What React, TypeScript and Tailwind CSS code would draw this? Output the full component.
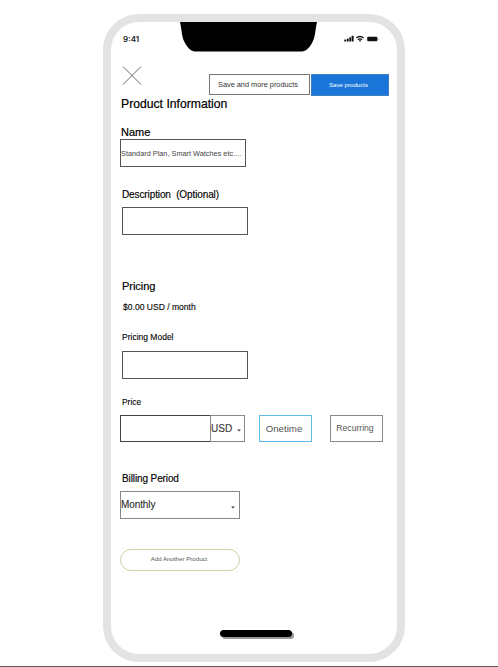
import React from 'react';

function StatusBar() {
  return (
    <div className="flex h-[30px] items-start pl-[12px]">
      <span className="mt-[9px] w-[57px] shrink-0 font-[Inter,sans-serif] text-[8px] leading-[16px] font-semibold text-[#222]">9:41</span>
      <svg className="h-[30px] w-[137px] shrink-0" viewBox="0 0 137 30">
        <path d="M0 0H137C135 9 135.5 15 132 21C129 27 125 29.5 121 29.5H16C12 29.5 8 27 5 21C1.5 15 2 9 0 0Z" fill="#000" />
      </svg>
      <svg className="mt-[12px] ml-[27px] h-[10px] w-[36px] shrink-0" viewBox="0 0 36 10" fill="#111">
        <rect x="0.3" y="5.4" width="1.9" height="2.2" rx="0.4" />
        <rect x="2.8" y="4.5" width="1.9" height="3.1" rx="0.4" />
        <rect x="5.3" y="3.2" width="1.9" height="4.4" rx="0.4" />
        <rect x="7.7" y="1.8" width="1.9" height="5.8" rx="0.4" />
        <g fill="none" stroke="#111" strokeWidth="1.3">
          <path d="M12.4 4.1Q16 0.8 19.6 4.1" />
          <path d="M14 5.8Q16 3.9 18 5.8" />
        </g>
        <path d="M14.8 6.6Q16 5.7 17.2 6.6L16 8Z" />
        <rect x="23.2" y="2.8" width="10.2" height="4.4" rx="1" />
        <rect x="34.2" y="4" width="0.8" height="2" rx="0.4" fill="#aaa" />
      </svg>
    </div>
  );
}

function Caret({ className }: { className: string }) {
  return (
    <svg className={className} viewBox="0 0 4 3" fill="#333">
      <path d="M0.2 0.4H3.8L2 2.6Z" />
    </svg>
  );
}

export default function App() {
  return (
    <div className="flex h-[667px] w-[498px] flex-col overflow-hidden border-b border-[#58585a] bg-white pt-[14px] pl-[103px] font-['Liberation_Sans',Arial,sans-serif] text-black [&_*]:whitespace-nowrap">
      <main className="flex h-[648px] w-[302px] shrink-0 flex-col rounded-[36px] border-8 border-[#e4e2e5] bg-white">
        <StatusBar />
        <header className="flex h-[44px] items-start pl-[11px]">
          <svg className="mt-[14px] h-[19px] w-[20px] shrink-0" viewBox="0 0 20 19" stroke="#444" strokeWidth="0.8">
            <path d="M1 0.5L19 18.5M19 0.5L1 18.5" />
          </svg>
          <button className="mt-[22px] ml-[67px] h-[21px] w-[101px] shrink-0 border border-[#777] pr-[3px] text-[7.35px] leading-[19px] text-[#333]">Save and more products</button>
          <button className="mt-[22px] ml-px h-[22px] w-[78px] shrink-0 border border-[#3d7fc4] bg-[#1976d8] pr-[3px] text-[6.1px] leading-[20px] text-white">Save products</button>
        </header>

        <h1 className="ml-[10px] h-[16px] text-[12.2px] leading-[16px] [-webkit-text-stroke:0.2px_#000]">Product Information</h1>
        <label className="mt-[12px] ml-[10px] h-[16px] text-[11px] leading-[16px] [-webkit-text-stroke:0.2px_#000]">Name</label>
        <div className="mt-[-1px] ml-[9px] h-[28px] w-[126px] border border-[#555] text-[7.33px] leading-[27px] text-[#444]">Standard Plan, Smart Watches etc....</div>
        <label className="mt-[19px] ml-[11px] h-[16px] text-[10px] leading-[18px] tracking-[-0.11px] whitespace-pre! [-webkit-text-stroke:0.15px_#000]">{'Description  (Optional)'}</label>
        <div className="mt-[5px] ml-[11px] h-[28px] w-[126px] border border-[#555]" />

        <h2 className="mt-[43px] ml-[11px] h-[16px] text-[11px] leading-[16px] tracking-[-0.04px] [-webkit-text-stroke:0.2px_#000]">Pricing</h2>
        <p className="mt-[5px] ml-[12px] h-[16px] text-[8.55px] leading-[16px] [-webkit-text-stroke:0.1px_#000]">$0.00 USD / month</p>
        <label className="mt-[14px] ml-[11px] h-[16px] text-[8.5px] leading-[16px] [-webkit-text-stroke:0.1px_#000]">Pricing Model</label>
        <div className="mt-[6px] ml-[11px] h-[28px] w-[126px] border border-[#555]" />
        <label className="mt-[15px] ml-[11px] h-[16px] text-[8.4px] leading-[16px] [-webkit-text-stroke:0.1px_#000]">Price</label>
        <div className="mt-[5px] ml-[9px] flex h-[27px] items-start">
          <div className="h-[27px] w-[90px] border border-r-0 border-[#444]" />
          <div className="flex h-[27px] w-[35px] border border-[#888] text-[10px] leading-[25px] text-[#444] [-webkit-text-stroke:0.2px_#444]">
            <span>USD</span>
            <Caret className="mt-[13px] ml-[5px] h-[3px] w-[4px]" />
          </div>
          <button className="ml-[14px] h-[27px] w-[53px] border border-[#62b8e4] pr-[3px] text-[9.7px] leading-[26px] text-[#555]">Onetime</button>
          <button className="ml-[18px] h-[27px] w-[53px] border border-[#888] pr-[3px] text-[8.6px] leading-[25px] text-[#555]">Recurring</button>
        </div>

        <label className="mt-[28px] ml-[11px] h-[16px] text-[10px] leading-[18px] tracking-[-0.11px] [-webkit-text-stroke:0.15px_#000]">Billing Period</label>
        <div className="mt-[5px] ml-[9px] flex h-[28px] w-[120px] justify-between border border-[#888] pr-[4px] text-[10px] leading-[26px] tracking-[-0.1px] text-[#333] [-webkit-text-stroke:0.15px_#333]">
          <span>Monthly</span>
          <Caret className="mt-[14px] h-[3px] w-[4px]" />
        </div>
        <button className="mt-[30px] ml-[9px] h-[22px] w-[120px] rounded-[11px] border border-[#c5d8a4] pr-[2px] pb-[2px] text-[6.15px] leading-[18px] text-[#555]">Add Another Product</button>
        <div className="mt-[59px] ml-[109px] h-[7px] w-[72px] rounded-full bg-black shadow-[2px_2px_0_#999]" />
      </main>
    </div>
  );
}
